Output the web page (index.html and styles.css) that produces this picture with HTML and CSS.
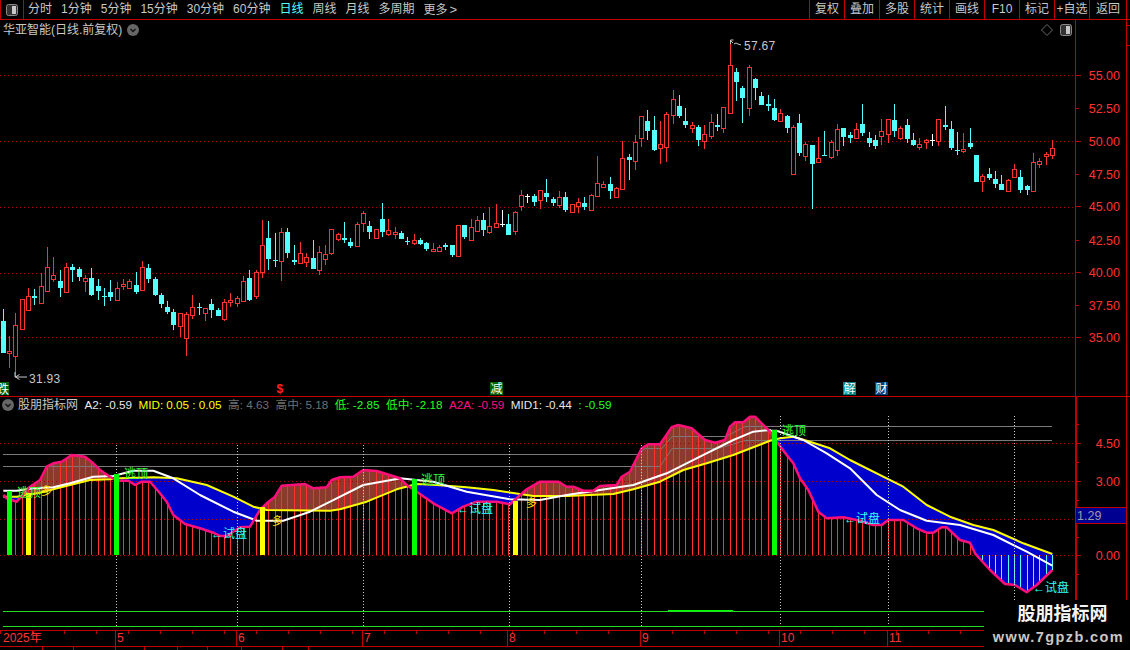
FILE: index.html
```html
<!DOCTYPE html>
<html lang="zh">
<head>
<meta charset="utf-8">
<title>华亚智能 日线</title>
<link rel="stylesheet" href="styles.css">
</head>
<body>
<div class="app">
  <header class="toolbar">
    <div class="corner">
      <svg class="panel-icon" viewBox="0 0 12 12"><rect x="0.5" y="0.5" width="11" height="11" rx="2" class="panel-outline"/><rect x="6" y="2" width="4" height="8" class="panel-fill"/></svg>
    </div>
    <nav class="tabs">
      <span>分时</span><span>1分钟</span><span>5分钟</span><span>15分钟</span><span>30分钟</span><span>60分钟</span><span class="active">日线</span><span>周线</span><span>月线</span><span>多周期</span><span>更多<b class="more">&gt;</b></span>
    </nav>
    <nav class="tools">
      <span>复权</span><span>叠加</span><span>多股</span><span>统计</span><span>画线</span><span>F10</span><span>标记</span><span>+自选</span><span class="last">返回</span>
    </nav>
  </header>

  <section class="pane pane-price">
    <div class="plot">
      <svg class="chart" viewBox="0 20 1075 376" width="1075" height="376">
        <g class="grid">
          <line x1="0" x2="1075" y1="75.5" y2="75.5"/><line x1="0" x2="1075" y1="141.5" y2="141.5"/><line x1="0" x2="1075" y1="207.5" y2="207.5"/><line x1="0" x2="1075" y1="273.5" y2="273.5"/><line x1="0" x2="1075" y1="337.5" y2="337.5"/>
        </g>
        <g id="candles"></g>
        <g class="extreme">
          <path d="M730.5 44V40h3M731 41l2 2M734 44l2-1 2 1 3 1"/>
          <path d="M15 372v5h12M15.500 377l4-2.500M15.500 377l4 2.500"/>
        </g>
        <text class="price-note" x="744" y="50">57.67</text>
        <text class="price-note" x="29" y="383">31.93</text>
        <g class="flags">
          <rect x="0" y="382" width="9" height="13" class="flag-green"/><text x="-3" y="393.500" class="flag-text">跌</text>
          <text x="276.500" y="393" class="flag-red">$</text>
          <rect x="490" y="382" width="13" height="13" class="flag-green"/><text x="490.500" y="393" class="flag-text">减</text>
          <rect x="843" y="382" width="13" height="13" class="flag-teal"/><text x="843.500" y="393" class="flag-text">解</text>
          <rect x="875" y="382" width="13" height="13" class="flag-blue"/><text x="875.500" y="393" class="flag-text">财</text>
        </g>
      </svg>
      <div class="title-row">
        <span>华亚智能(日线.前复权)</span>
        <svg class="chev" viewBox="0 0 12 12"><circle cx="6" cy="6" r="6" class="chev-disc"/><path d="M3.500 5l2.500 2.500L8.500 5" class="chev-mark"/></svg>
      </div>
      <div class="corner-icons">
        <svg class="diamond" viewBox="0 0 12 12"><path d="M6 .5L11.500 6 6 11.500.5 6z"/></svg>
        <svg class="panel-icon" viewBox="0 0 12 12"><rect x="0.500" y="0.500" width="11" height="11" rx="2" class="panel-outline"/><rect x="6" y="2" width="4" height="8" class="panel-fill"/></svg>
      </div>
    </div>
    <div class="axis">
      <svg class="chart" viewBox="1075 20 51 376" width="51" height="376">
        <g class="ticks">
          <path d="M1075 75.500h6M1075 108.500h4M1075 141.500h6M1075 174.500h4M1075 206.500h6M1075 240.500h4M1075 272.500h6M1075 305.500h4M1075 337.500h6"/>
        </g>
        <g class="scale">
          <text x="1120" y="80">55.00</text><text x="1120" y="113">52.50</text><text x="1120" y="146">50.00</text><text x="1120" y="179">47.50</text><text x="1120" y="211">45.00</text><text x="1120" y="245">42.50</text><text x="1120" y="277">40.00</text><text x="1120" y="310">37.50</text><text x="1120" y="342">35.00</text>
        </g>
      </svg>
    </div>
    <div class="rail"></div>
  </section>

  <section class="pane pane-index">
    <div class="plot">
      <svg class="chart" viewBox="0 397 1075 233" width="1075" height="233">
        <g id="fills"></g>
        <g class="grid">
          <line x1="0" x2="1075" y1="443.500" y2="443.500"/><line x1="0" x2="1075" y1="481.500" y2="481.500"/><line x1="0" x2="1075" y1="519.500" y2="519.500"/><line x1="0" x2="1075" y1="555.500" y2="555.500"/>
        </g>
        <polyline class="level" points="3,454.500 638,454.500 645,448.500 662,448.500 672,436.500 726,436.500 745,426.500 1052,426.500"/>
        <polyline class="level" points="3,466.500 660,466.500 672,448.500 718,448.500 745,440.500 1052,440.500"/>
        <g id="bars"></g>
        <g id="lines"></g>
        <g class="vdots">
          <line x1="116.500" x2="116.500" y1="445" y2="627"/><line x1="237.500" x2="237.500" y1="445" y2="627"/><line x1="363.500" x2="363.500" y1="445" y2="627"/><line x1="509.500" x2="509.500" y1="445" y2="627"/><line x1="641.500" x2="641.500" y1="445" y2="627"/><line x1="780.500" x2="780.500" y1="416" y2="627"/><line x1="888.500" x2="888.500" y1="416" y2="627"/><line x1="1014.500" x2="1014.500" y1="416" y2="627"/>
        </g>
        <g class="signal-bars">
          <rect x="7" y="491" width="5" height="64" class="sb-green"/><rect x="114" y="474" width="5" height="81" class="sb-green"/><rect x="412" y="479" width="5" height="76" class="sb-green"/><rect x="772" y="430" width="5" height="125" class="sb-green"/>
          <rect x="26" y="493" width="5" height="62" class="sb-yellow"/><rect x="260" y="507" width="5" height="48" class="sb-yellow"/><rect x="513" y="501" width="5" height="54" class="sb-yellow"/>
        </g>
        <g class="notes-green">
          <text x="17" y="497">逃顶</text><text x="124" y="478">逃顶</text><text x="421" y="484">逃顶</text><text x="782" y="435">逃顶</text>
        </g>
        <g class="notes-cyan">
          <text x="211" y="538">←试盘</text><text x="457" y="513">←试盘</text><text x="844" y="523">←试盘</text><text x="1033" y="592">←试盘</text>
        </g>
        <g class="notes-yellow">
          <text x="41" y="495">多</text><text x="272" y="525">多</text><text x="526" y="507">多</text>
        </g>
        <line class="floor" x1="3" x2="984" y1="611.500" y2="611.500"/>
        <line class="floor" x1="3" x2="984" y1="626.500" y2="626.500"/>
        <line class="floor floor-hi" x1="668" x2="733" y1="610.500" y2="610.500"/>
      </svg>
      <div class="legend">
        <svg class="chev" viewBox="0 0 12 12"><circle cx="6" cy="6" r="6" class="chev-disc"/><path d="M3.500 5l2.500 2.500L8.500 5" class="chev-mark"/></svg>
        <span class="l-name">股朋指标网</span>
        <span class="l-white">A2: -0.59</span>
        <span class="l-yellow">MID: 0.05 : 0.05</span>
        <span class="l-gray">高: 4.63</span>
        <span class="l-gray">高中: 5.18</span>
        <span class="l-green">低: -2.85</span>
        <span class="l-green">低中: -2.18</span>
        <span class="l-pink">A2A: -0.59</span>
        <span class="l-white">MID1: -0.44</span>
        <span class="l-green">: -0.59</span>
      </div>
    </div>
    <div class="axis axis-index">
      <svg class="chart" viewBox="1075 397 51 233" width="51" height="233">
        <g class="ticks">
          <path d="M1075 424.500h4M1075 443.500h6M1075 462.500h4M1075 481.500h6M1075 500.500h4M1075 537.500h4M1075 555.500h6M1075 574.500h4"/>
        </g>
        <g class="scale">
          <text x="1120" y="448">4.50</text><text x="1120" y="486">3.00</text><text x="1120" y="560">0.00</text>
        </g>
        <rect class="tag" x="1076" y="507" width="50" height="16"/>
        <path class="tag-edge" d="M1076 507.500h50M1076 523.500h50"/>
        <text class="tag-text" x="1077" y="520">1.29</text>
      </svg>
    </div>
    <div class="rail"></div>
  </section>

  <footer class="timebar">
    <span class="m m1">2025年</span><span class="m m2">5</span><span class="m m3">6</span><span class="m m4">7</span><span class="m m5">8</span><span class="m m6">9</span><span class="m m7">10</span><span class="m m8">11</span>
  </footer>
  <div class="stubs">
    <i class="s1"></i><i class="s2"></i><i class="s3"></i><i class="s4"></i><i class="s5"></i><i class="s6"></i><i class="s7"></i><i class="s8"></i><i class="s9"></i>
  </div>

  <aside class="watermark">
    <strong>股朋指标网</strong>
    <em>www.7gpzb.com</em>
  </aside>
</div>
<script src="chart.js"></script>
</body>
</html>
```

FILE: styles.css
```css
* { box-sizing: border-box; }
html, body { margin: 0; padding: 0; background: #000; }
body {
  width: 1130px;
  height: 650px;
  overflow: hidden;
  font: 12px "Liberation Sans", "Noto Sans CJK SC", sans-serif;
  color: #c8c8c8;
}
.app { position: relative; width: 1130px; height: 650px; overflow: hidden; }

.toolbar {
  display: flex;
  height: 20px;
  border-bottom: 1px solid #c00000;
  line-height: 19px;
}
.corner {
  display: flex;
  align-items: center;
  justify-content: center;
  width: 24px;
  border-left: 1px solid #c00000;
  border-right: 1px solid #c00000;
}
.panel-icon { width: 12px; height: 12px; }
.panel-outline { fill: #333; stroke: #8a8a8a; }
.panel-fill { fill: #c8c8c8; }
.tabs { display: flex; gap: 9px; padding-left: 4px; }
.tabs .active { color: #54ffff; }
.more { font-weight: normal; font-size: 13px; margin-left: 2px; }
.tools { display: flex; margin-left: auto; margin-right: 3px; }
.tools span {
  width: 35px;
  text-align: center;
  border-left: 1px solid #c00000;
  white-space: nowrap;
}
.tools .last { width: 38px; border-right: 1px solid #c00000; }

.pane { display: flex; }
.pane-price { height: 377px; border-bottom: 1px solid #c00000; }
.pane-index { height: 233px; }
.plot { position: relative; width: 1075px; flex: none; }
.chart { display: block; }
.axis { width: 51px; flex: none; border-left: 1px solid #c00000; }
.axis-index { border-left-width: 2px; }
.axis .chart { margin-left: -1px; }
.axis-index .chart { margin-left: -2px; }
.rail { flex: 1; border-left: 1px solid #c00000; }
.pane-price .rail { background: linear-gradient(#c00000, #c00000) 0 5px / 4px 1px no-repeat, linear-gradient(#c00000, #c00000) 0 25px / 4px 1px no-repeat; }

.grid line { stroke: #a00000; stroke-dasharray: 1 3; shape-rendering: crispEdges; }
.ticks path { stroke: #c00000; fill: none; }
.scale text { fill: #ff3232; font-size: 12.500px; text-anchor: end; }
.price-note { fill: #c8c8c8; font-size: 12px; letter-spacing: .3px; }
.extreme path { stroke: #c8c8c8; fill: none; }
.flag-text { fill: #fff; font-size: 12px; }
.flag-red { fill: #ff2020; font-size: 12px; font-weight: bold; }
.flag-green { fill: #006400; }
.flag-teal { fill: #008080; }
.flag-blue { fill: #004080; }

.title-row {
  position: absolute;
  left: 3px;
  top: 2px;
  display: flex;
  align-items: center;
  gap: 5px;
  line-height: 16px;
}
.chev { width: 12px; height: 12px; flex: none; }
.chev-disc { fill: #666; }
.chev-mark { fill: none; stroke: #111; stroke-width: 1.300; }
.corner-icons {
  position: absolute;
  right: 3px;
  top: 4px;
  display: flex;
  align-items: center;
  gap: 7px;
}
.diamond { width: 12px; height: 12px; }
.diamond path { fill: none; stroke: #6a6a6a; }

.level { fill: none; stroke: #7a7a7a; }
.vdots line { stroke: #c8c8c8; stroke-dasharray: 1 2; shape-rendering: crispEdges; }
.sb-green { fill: #00ff00; }
.sb-yellow { fill: #ffff00; }
.notes-green text { fill: #33ff33; font-size: 12px; }
.notes-cyan text { fill: #33ffff; font-size: 12px; }
.notes-yellow text { fill: #ffe000; font-size: 11px; }
.floor { stroke: #22dd22; shape-rendering: crispEdges; }
.floor-hi { stroke: #00ff00; }
.tag { fill: #000090; }
.tag-edge { stroke: #c00000; fill: none; }
.tag-text { fill: #9a9ab0; font-size: 12.500px; }

.legend {
  position: absolute;
  left: 2px;
  top: 0;
  display: flex;
  align-items: center;
  gap: 6.500px;
  height: 16px;
  white-space: nowrap;
  line-height: 16px;
  font-size: 11.700px;
}
.l-name { margin-left: -2.500px; font-size: 12px; color: #c8c8c8; }
.l-white { color: #e8e8e8; }
.l-yellow { color: #ffff00; }
.l-gray { color: #707070; }
.l-green { color: #22ff22; }
.l-pink { color: #ff1080; }

.timebar {
  display: flex;
  height: 17px;
  border-top: 1px solid #c00000;
  border-bottom: 1px solid #c00000;
  width: 984px;
  line-height: 15px;
  color: #ff3232;
  background: repeating-linear-gradient(90deg, #c00000 0 1px, transparent 1px 32px) 0 0 / 100% 3px no-repeat;
}
.m { border-left: 1px solid #c00000; padding-left: 1px; flex: none; }
.m1 { width: 115px; border-left: 0; padding-left: 3px; }
.m2 { width: 121px; }
.m3 { width: 126px; }
.m4 { width: 145px; }
.m5 { width: 133px; }
.m6 { width: 139px; }
.m7 { width: 108px; }
.m8 { width: 96px; }

.stubs { display: flex; height: 3px; width: 984px; }
.stubs i { display: block; height: 3px; border-right: 1px solid #c00000; flex: none; }
.s1 { width: 43px; } .s2 { width: 31px; } .s3 { width: 42px; } .s4 { width: 29px; } .s5 { width: 33px; }
.s6 { width: 30px; } .s7 { width: 34px; } .s8 { width: 41px; } .s9 { width: 26px; }

.watermark {
  position: absolute;
  left: 984px;
  top: 600px;
  width: 146px;
  height: 50px;
  background: #000;
  display: flex;
  flex-direction: column;
  align-items: center;
  padding-top: 3px;
}
.watermark strong { font-size: 18px; line-height: 23px; color: #f4f4f4; margin-left: 11px; }
.watermark em { font-style: normal; font-weight: bold; font-size: 14.500px; line-height: 20px; color: #c8c8c8; letter-spacing: 1.400px; margin-top: 1px; margin-left: 3px; white-space: nowrap; }

.wick-r { stroke: #ff3232; }
.wick-c { stroke: #54ffff; }
.wick-w { stroke: #ffffff; }
.body-r { fill: #000; stroke: #ff3232; }
.body-c { fill: #54ffff; }
.body-w { fill: #ffffff; }
.fill-up { fill: #8c3a2e; }
.fill-down { fill: #0000cc; }
.bar-r { stroke: #ff3232; }
.bar-c { stroke: #54ffff; }
.curve { fill: none; stroke-width: 2; stroke-linejoin: round; }
.c-pink { stroke: #ff0f7a; stroke-width: 2.500; }
.c-yellow { stroke: #ffff00; }
.c-white { stroke: #ffffff; }
```

FILE: chart.js
```js
// Candle values are read off the chart at 3x scale: "type high top bottom low", grouped by y origin.
var CANDLE_GROUPS = [
  [200, "c 327 363 459 459,r 408 454 460 503,r 340 376 467 530,r 297 297 386 386,r 265 289 329 332,c 268 288 293 315,r 218 259 308 308,r 141 202 272 275,r 171 226 236 245,c 210 243 264 291,r 190 202 275 279,c 193 201 209 246,c 201 207 231 243,r 225 235 242 276,c 205 234 285 288,c 238 258 273 300,c 265 288 290 318,c 240 276 291 303,r 247 265 299 299,r 238 253 257 270,r 238 244 263 266,c 216 255 276 282,r 183 202 269 269,c 193 204 237 249,c 232 237 285 288,c 280 285 312 324,c 304 321 336 342,c 327 336 375 390,r 340 340 377 411,r 337 343 413 468,r 286 322 344 357,c 309 321 323 345,r 325 325 338 363,c 297 312 330 354,c 324 330 348 348,r 298 307 356 363,r 280 301 307 321,r 289 295 308 321,r 229 244 302 302,c 210 234 301 303,r 211 217 287 297,r 60 136 215 234,c 64 114 177 210,c 99 180 184 201"],
  [170, "r 174 186 272 333,c 175 186 248 264,c 225 270 275 285,r 217 250 278 278,r 250 262 275 292,c 210 265 297 297,r 228 247 299 314,r 225 252 266 285,r 178 178 248 255,r 188 193 206 213,c 156 204 209 219,c 205 216 228 234,r 156 163 227 227,r 124 130 158 186,c 153 168 186 206,r 178 178 203 203,c 99 147 186 200,r 148 181 191 198,r 172 187 193 206,c 184 189 207 207,c 202 212 214 226,r 193 211 218 224,c 204 210 222 226,c 216 220 237 242,r 220 238 242 242,r 225 232 243 245,c 220 226 231 241,c 225 225 255 261,r 166 166 257 257,c 166 166 201 206,r 148 172 209 209,r 138 151 182 182,c 129 151 179 197,r 111 169 185 191,r 102 160 170 170,w 120 162 164 171,c 132 162 194 194,r 124 127 182 194,r 60 76 109 122,w 72 78 80 99,c 72 79 95 108,r 61 61 89 117,c 27 69 81 96,c 82 87 99 107,r 64 82 105 113,c 67 81 120 126,r 103 103 125 128,r 85 97 109 128"],
  [60, "c 411 430 440 450,r 403 406 450 450,r 288 370 407 407,r 363 373 380 380,c 351 373 392 417,r 382 385 410 410,r 243 295 386 386,c 282 291 300 360,r 225 247 302 330,r 169 169 233 261,c 150 183 212 240,c 168 210 270 273,r 183 253 263 312,r 157 163 260 306,r 90 118 164 192,c 105 138 168 174,c 144 183 195 204,r 186 196 203 219,c 196 201 240 258,r 195 223 242 267,r 162 187 227 237,c 162 195 200 213,r 140 142 203 219,r -54 16 158 158,c 25 36 66 123,c 78 84 114 189,r 16 22 143 168,c 53 57 84 120,c 96 108 135 135,c 105 132 138 153,c 117 144 180 183,r 147 160 183 186,c 165 168 204 219"],
  [90, "r 105 111 251 251,c 72 99 189 198,r 156 162 197 213,c 165 165 222 357,r 141 205 215 215,c 123 195 197 198,r 150 157 201 207,r 102 118 179 198,c 114 114 141 168,c 126 135 144 159,r 99 118 143 143,c 42 102 129 138,c 126 144 159 171,c 135 150 168 177,r 87 124 137 165,r 88 88 131 159,c 42 90 123 141,r 108 115 143 150,c 87 105 147 159,c 129 150 165 168,r 144 163 171 180,r 147 151 155 177,w 132 150 152 168,r 88 88 152 168,c 48 105 110 120,c 93 117 174 180,c 126 180 182 195,r 129 178 182 189,c 114 159 171 177,c 195 195 276 276,r 252 259 272 306,c 234 252 264 270,c 243 267 282 294,c 255 282 300 300,r 267 270 303 306,r 222 238 261 264,c 240 261 300 309,c 285 288 300 315,r 189 217 303 303,r 204 214 221 234,r 186 192 197 225,r 150 175 194 207"]
];

function candleX(i) { return Math.floor(3.33 + 6.32 * i) + 0.5; }

function drawCandles() {
  var out = [], i = 0;
  CANDLE_GROUPS.forEach(function (group) {
    var oy = group[0];
    group[1].split(",").forEach(function (item) {
      var p = item.split(" ");
      var t = p[0], toY = function (v) { return Math.round(oy + Number(v) / 3); };
      var hi = toY(p[1]), top = toY(p[2]), bot = toY(p[3]), lo = toY(p[4]);
      var x = candleX(i);
      out.push('<line class="wick-' + t + '" x1="' + x + '" x2="' + x + '" y1="' + hi + '" y2="' + lo + '"/>');
      if (t === "r") {
        out.push('<rect class="body-r" x="' + (x - 2) + '" y="' + (top + 0.5) + '" width="4" height="' + Math.max(bot - top, 1) + '"/>');
      } else {
        out.push('<rect class="body-' + t + '" x="' + (x - 2.5) + '" y="' + top + '" width="5" height="' + Math.max(bot - top, 1) + '"/>');
      }
      i++;
    });
  });
  document.getElementById("candles").innerHTML = out.join("");
  return i;
}

function pts(ox, oy, a) {
  var r = [];
  for (var k = 0; k < a.length; k += 2) r.push([ox + a[k] / 3, oy + a[k + 1] / 3]);
  return r;
}

var PINK = [].concat(
  pts(0, 370, [10,375,20,385,50,395,90,350,120,330,140,290,160,280,185,275,215,255,255,260,280,280,300,300,330,320,350,332,385,332,405,345,425,335,450,335,480,370,500,395,520,435,555,462,600,475,640,488,660,498,680,498,720,472,750,470,780,420,800,400,825,380,845,347,915,342,940,355,980,352,995,330,1020,322,1060,320,1090,300,1130,303,1200,325]),
  pts(400, 370, [20,345,50,365,100,400,155,430,190,410,230,395,290,395,330,403,350,385,380,358,420,335,475,335,500,350,520,350,550,362,580,362,600,348,650,345,665,320,690,305,725,235,745,223,780,223,815,172,835,165,875,175,915,210,945,218,975,210,990,170,1005,157,1030,157,1050,140,1065,140,1110,185]),
  pts(760, 400, [50,125,80,165,100,190,120,235,145,270,175,335,200,355,250,352,290,360,340,375,365,375,385,360,430,360,470,385,500,398,520,398,545,382,560,382,600,420,630,428,645,460,690,510,735,552,765,555,800,577,830,555,877,510])
);
var YELLOW = [].concat(
  pts(0, 370, [10,380,50,380,120,368,160,358,210,345,270,330,330,328,360,325,460,322,530,325,620,345,700,380,760,410,800,420,990,422,1020,418,1100,395,1190,358]),
  pts(400, 370, [50,342,110,345,200,352,280,360,360,372,400,378,500,378,640,372,700,358,780,335,850,300,920,280,1000,255,1060,232,1110,212]),
  pts(760, 400, [60,115,100,110,150,125,210,145,270,180,380,235,430,260,500,315,570,350,640,375,700,390,790,430,877,462])
);
var WHITE = [].concat(
  pts(0, 370, [10,362,50,362,100,355,160,352,210,340,280,320,340,318,400,302,460,302,520,325,600,375,700,425,770,452,850,452,930,425,1010,385,1090,345,1190,327]),
  pts(400, 370, [0,325,100,335,200,365,330,388,420,390,500,375,600,360,700,345,800,310,900,260,1000,210,1060,185,1110,180]),
  pts(760, 400, [30,92,50,92,130,120,200,160,270,205,350,285,420,330,500,362,600,375,700,405,800,455,877,497])
);

function yAt(series, x) {
  if (x <= series[0][0]) return series[0][1];
  for (var k = 1; k < series.length; k++) {
    if (x <= series[k][0]) {
      var a = series[k - 1], b = series[k];
      return a[1] + (b[1] - a[1]) * (x - a[0]) / (b[0] - a[0]);
    }
  }
  return series[series.length - 1][1];
}

function polyline(series, cls) {
  var s = series.map(function (p) { return p[0].toFixed(1) + "," + p[1].toFixed(1); }).join(" ");
  return '<polyline class="curve ' + cls + '" points="' + s + '"/>';
}

function drawIndex(count) {
  var up = "", down = "";
  for (var x = 4; x < 1053; x++) {
    var p = Math.round(yAt(PINK, x + 0.5)), y = Math.round(yAt(YELLOW, x + 0.5));
    if (p < y) up += "M" + x + " " + p + "h1V" + y + "h-1z";
    else if (p > y) down += "M" + x + " " + y + "h1V" + p + "h-1z";
  }
  document.getElementById("fills").innerHTML =
    '<path class="fill-up" d="' + up + '"/><path class="fill-down" d="' + down + '"/>';

  var bars = [];
  for (var i = 1; i < count; i++) {
    var cx = candleX(i), py = Math.round(yAt(PINK, cx));
    bars.push('<line class="' + (py < 555 ? "bar-r" : "bar-c") + '" x1="' + cx + '" x2="' + cx + '" y1="' + py + '" y2="555"/>');
  }
  document.getElementById("bars").innerHTML = bars.join("");
  document.getElementById("lines").innerHTML =
    polyline(YELLOW, "c-yellow") + polyline(WHITE, "c-white") + polyline(PINK, "c-pink");
}

drawIndex(drawCandles());
```
